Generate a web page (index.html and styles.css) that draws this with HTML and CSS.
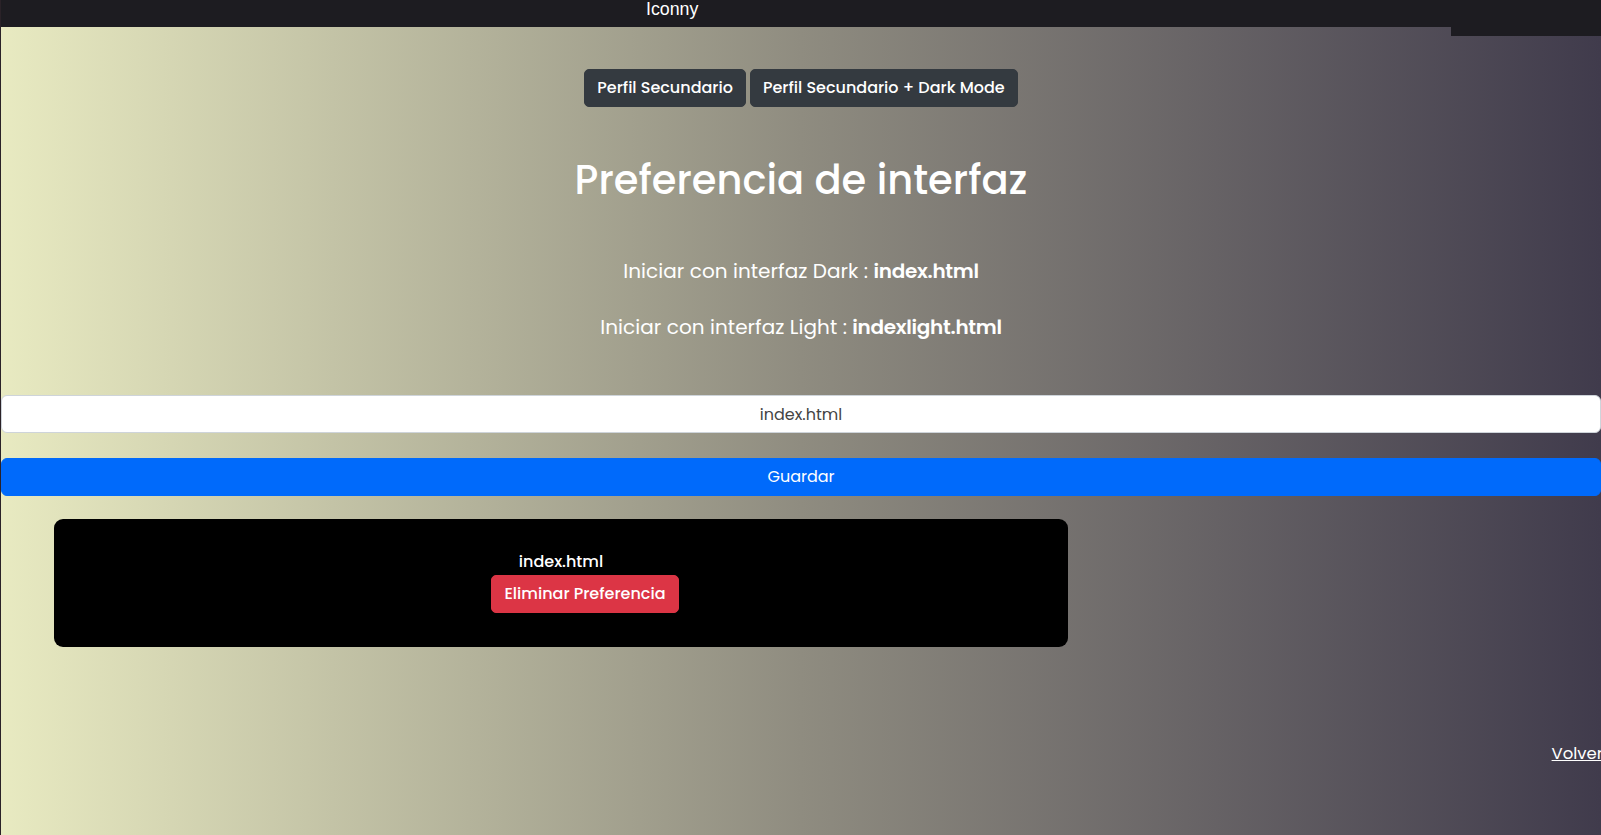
FILE: index.html
```html
<!DOCTYPE html>
<html lang="es">
<head>
<meta charset="utf-8">
<title>Iconny - Preferencia de interfaz</title>
<link rel="stylesheet" href="styles.css">
</head>
<body>
<header class="topbar">
  <div class="brand-bar"><span class="brand">Iconny</span></div>
  <div class="topbar-end"></div>
</header>
<main class="page">
  <div class="profile-actions">
    <button class="btn btn-dark">Perfil Secundario</button>
    <button class="btn btn-dark">Perfil Secundario + Dark Mode</button>
  </div>
  <h1 class="title">Preferencia de interfaz</h1>
  <p class="hint">Iniciar con interfaz Dark : <strong>index.html</strong></p>
  <p class="hint">Iniciar con interfaz Light : <strong>indexlight.html</strong></p>
  <form class="pref-form">
    <input class="field" type="text" value="index.html">
    <button class="btn btn-primary" type="button">Guardar</button>
  </form>
  <section class="pref-card">
    <span class="pref-name">index.html</span>
    <button class="btn btn-danger">Eliminar Preferencia</button>
  </section>
  <div class="back-row"><a class="back" href="#">Volver</a></div>
</main>
</body>
</html>
```
FILE: styles.css
```css
html {
  background: #2a2228;
  height: 100%;
}
body {
  margin: 0 0 0 1px;
  min-height: 100%;
  font-family: "Poppins", "Inter", "Open Sans", sans-serif;
  color: #fff;
  background: linear-gradient(to right, #e8eac1 0%, #8f8c80 50%, #403b4c 100%);
  overflow: hidden;
}
.topbar {
  display: flex;
  align-items: flex-start;
  margin-left: -1px;
}
.brand-bar {
  flex: 1;
  height: 27px;
  background: #1d1c21;
  padding-left: 646px;
  box-sizing: border-box;
}
.brand {
  font-family: "Liberation Sans", Arial, sans-serif;
  font-size: 17.8px;
  line-height: 18px;
  color: #fff;
  display: block;
}
.topbar-end {
  width: 150px;
  height: 36px;
  background: #1d1c21;
}
.page {
  display: flex;
  flex-direction: column;
  margin-top: -9px;
}
.profile-actions {
  display: flex;
  justify-content: center;
  gap: 4px;
  margin-top: 42px;
}
.btn {
  font-family: "Poppins", "Inter", sans-serif;
  font-size: 16px;
  font-weight: 500;
  line-height: 24px;
  padding: 6px 12px;
  border: 1px solid transparent;
  border-radius: 5px;
  color: #fff;
  cursor: pointer;
}
.btn-dark {
  background: #343a40;
  border-color: #343a40;
  height: 38px;
}
.title {
  margin: 49px 0 0;
  text-align: center;
  font-size: 40px;
  font-weight: 500;
  line-height: 48px;
}
.hint {
  margin: 0;
  text-align: center;
  font-size: 20px;
  line-height: 30px;
  letter-spacing: 0.05px;
}
.title + .hint {
  margin-top: 52px;
}
.hint + .hint {
  margin-top: 26px;
}
.hint strong {
  font-weight: 600;
  letter-spacing: -0.3px;
}
.pref-form {
  display: flex;
  flex-direction: column;
  margin: 53px 0 0;
}
.field {
  height: 38px;
  box-sizing: border-box;
  border: 1px solid #ced4da;
  border-radius: 6px;
  background: #fff;
  text-align: center;
  font-family: "Poppins", "Inter", sans-serif;
  font-size: 16px;
  color: #444;
  padding: 6px 12px;
}
.btn-primary {
  margin-top: 25px;
  height: 38px;
  background: #006afb;
  border-color: #006afb;
  font-weight: 400;
  border-radius: 6px;
}
.pref-card {
  margin: 23px 0 0 53px;
  width: 1014px;
  height: 128px;
  box-sizing: border-box;
  background: #000;
  border-radius: 9px;
  padding-top: 31px;
  display: flex;
  flex-direction: column;
  align-items: center;
}
.pref-name {
  font-size: 16px;
  line-height: 24px;
  font-weight: 500;
}
.btn-danger {
  margin-top: 1px;
  margin-left: 48px;
  height: 38px;
  background: #dc3545;
  border-color: #dc3545;
  font-weight: 500;
}
.back-row {
  display: flex;
  justify-content: flex-end;
  margin-top: 95px;
  margin-right: -2px;
}
.back {
  color: #fff;
  font-size: 16.5px;
  line-height: 24px;
  font-weight: 400;
}
```
